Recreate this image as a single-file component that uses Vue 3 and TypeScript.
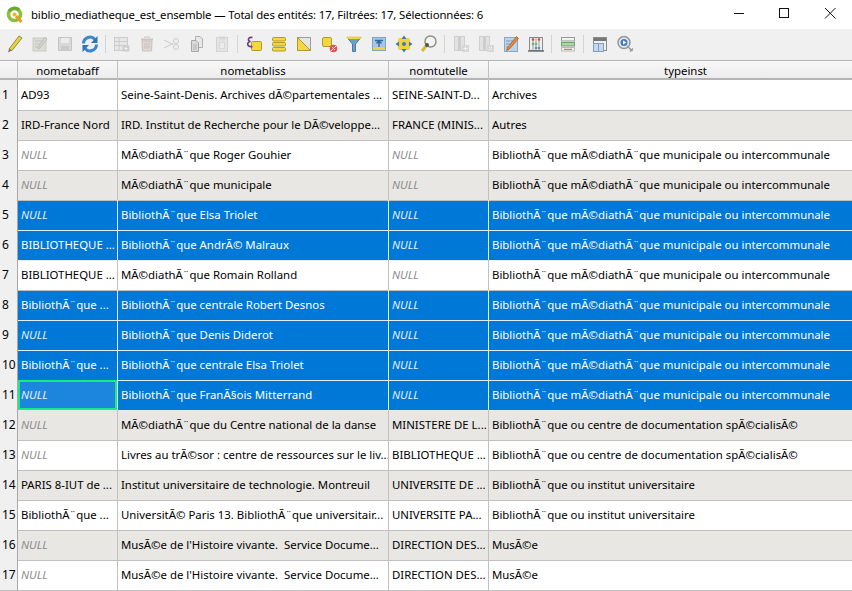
<script setup lang="ts">
interface Row {
  aff: string
  liss: string
  tut: string
  type: string
  sel?: boolean
}

const bib = 'BibliothÃ¨que mÃ©diathÃ¨que municipale ou intercommunale'
const doc = 'BibliothÃ¨que ou centre de documentation spÃ©cialisÃ©'
const univ = 'BibliothÃ¨que ou institut universitaire'

const rows: Row[] = [
  { aff: 'AD93', liss: 'Seine-Saint-Denis. Archives dÃ©partementales ...', tut: 'SEINE-SAINT-D...', type: 'Archives' },
  { aff: 'IRD-France Nord', liss: 'IRD. Institut de Recherche pour le DÃ©veloppe...', tut: 'FRANCE (MINIS...', type: 'Autres' },
  { aff: 'NULL', liss: 'MÃ©diathÃ¨que Roger Gouhier', tut: 'NULL', type: bib },
  { aff: 'NULL', liss: 'MÃ©diathÃ¨que municipale', tut: 'NULL', type: bib },
  { aff: 'NULL', liss: 'BibliothÃ¨que Elsa Triolet', tut: 'NULL', type: bib, sel: true },
  { aff: 'BIBLIOTHEQUE ...', liss: 'BibliothÃ¨que AndrÃ© Malraux', tut: 'NULL', type: bib, sel: true },
  { aff: 'BIBLIOTHEQUE ...', liss: 'MÃ©diathÃ¨que Romain Rolland', tut: 'NULL', type: bib },
  { aff: 'BibliothÃ¨que ...', liss: 'BibliothÃ¨que centrale Robert Desnos', tut: 'NULL', type: bib, sel: true },
  { aff: 'NULL', liss: 'BibliothÃ¨que Denis Diderot', tut: 'NULL', type: bib, sel: true },
  { aff: 'BibliothÃ¨que ...', liss: 'BibliothÃ¨que centrale Elsa Triolet', tut: 'NULL', type: bib, sel: true },
  { aff: 'NULL', liss: 'BibliothÃ¨que FranÃ§ois Mitterrand', tut: 'NULL', type: bib, sel: true },
  { aff: 'NULL', liss: 'MÃ©diathÃ¨que du Centre national de la danse', tut: 'MINISTERE DE L...', type: doc },
  { aff: 'NULL', liss: 'Livres au trÃ©sor : centre de ressources sur le liv...', tut: 'BIBLIOTHEQUE ...', type: doc },
  { aff: 'PARIS 8-IUT de ...', liss: 'Institut universitaire de technologie. Montreuil', tut: 'UNIVERSITE DE ...', type: univ },
  { aff: 'BibliothÃ¨que ...', liss: 'UniversitÃ© Paris 13. BibliothÃ¨que universitair...', tut: 'UNIVERSITE PA...', type: univ },
  { aff: 'NULL', liss: "MusÃ©e de l'Histoire vivante.  Service Docume...", tut: 'DIRECTION DES...', type: 'MusÃ©e' },
  { aff: 'NULL', liss: "MusÃ©e de l'Histoire vivante.  Service Docume...", tut: 'DIRECTION DES...', type: 'MusÃ©e' },
]

const headers = ['nometabaff', 'nometabliss', 'nomtutelle', 'typeinst']
</script>

<template>
  <div class="win">
    <div class="titlebar">
      <svg class="logo" width="18" height="18" viewBox="0 0 18 18">
        <circle cx="8.5" cy="8.5" r="6" fill="none" stroke="#8fbf3f" stroke-width="3.6" />
        <path d="M3 5.5 A6.5 6.5 0 0 1 13 4" fill="none" stroke="#6ea92f" stroke-width="3.4" />
        <circle cx="8.5" cy="8.5" r="2" fill="#f0b429" />
        <path d="M10 10 L15.5 16" stroke="#e8a01f" stroke-width="3" />
      </svg>
      <span class="title">biblio_mediatheque_est_ensemble — Total des entités: 17, Filtrées: 17, Sélectionnées: 6</span>
      <div class="winbtns">
        <svg width="46" height="29" viewBox="0 0 46 29"><path d="M20 13.5 H30" stroke="#111" /></svg>
        <svg width="46" height="29" viewBox="0 0 46 29"><rect x="19.5" y="8.5" width="9" height="9" fill="none" stroke="#111" /></svg>
        <svg width="46" height="29" viewBox="0 0 46 29"><path d="M19 8 L29.500 18.5 M29.500 8 L19 18.5" stroke="#111" /></svg>
      </div>
    </div>

    <div class="toolbar">
      <!-- toggle editing -->
      <div class="tb">
        <svg width="20" height="20" viewBox="0 0 20 20">
          <path d="M14 2 L17 4 L7 16.5 L4 15 Z" fill="#e8cf4a" stroke="#9b8d3a" />
          <path d="M4 15 L3 18.5 L7 16.5 Z" fill="#77756c" />
        </svg>
      </div>
      <!-- multi edit -->
      <div class="tb off">
        <svg width="20" height="20" viewBox="0 0 20 20">
          <rect x="3" y="4" width="13" height="13" fill="#d9d9d2" stroke="#c4c4bc" />
          <path d="M5 7 H12 M5 10 H10 M5 13 H9" stroke="#bdbdb5" />
          <path d="M15 3 L17 5 L10 14 L8 15 L8.500 12.500 Z" fill="#cfcfc6" stroke="#b8b8b0" />
        </svg>
      </div>
      <!-- save -->
      <div class="tb off">
        <svg width="20" height="20" viewBox="0 0 20 20">
          <path d="M3.500 3.500 H16.500 V16.500 H3.500 Z" fill="#d6d6d6" stroke="#bdbdbd" />
          <rect x="6" y="4" width="8" height="5" fill="#ececec" />
          <rect x="6" y="12" width="8" height="4.500" fill="#c4c4c4" />
        </svg>
      </div>
      <!-- reload -->
      <div class="tb">
        <svg width="20" height="20" viewBox="0 0 20 20" fill="none">
          <path d="M3.500 9.500 A6.500 6.500 0 0 1 15 5.500" stroke="#3c87c9" stroke-width="3" />
          <path d="M16.500 10.500 A6.500 6.500 0 0 1 5 14.500" stroke="#3c87c9" stroke-width="3" />
          <path d="M17.500 2 V9 H11 Z" fill="#2f75b5" />
          <path d="M2.500 18 V11 H9 Z" fill="#2f75b5" />
        </svg>
      </div>
      <div class="sep"></div>
      <!-- add feature -->
      <div class="tb off">
        <svg width="20" height="20" viewBox="0 0 20 20">
          <rect x="2.500" y="3.500" width="13" height="13" fill="#e6e6e6" stroke="#c6c6c6" />
          <path d="M2.500 7.500 H15.500 M2.500 11.500 H15.500 M7 3.500 V16.500" stroke="#c6c6c6" />
          <rect x="10.500" y="11.500" width="7" height="6" fill="#c9c9c9" />
          <path d="M12.500 14.500 H15.500 M14 13 V16" stroke="#f4f4f4" />
        </svg>
      </div>
      <!-- delete -->
      <div class="tb off">
        <svg width="20" height="20" viewBox="0 0 20 20">
          <path d="M4 5.500 H16" stroke="#c9bfbb" stroke-width="2" />
          <path d="M7.500 4 V3 H12.500 V4" fill="none" stroke="#c9bfbb" />
          <path d="M5 7 H15 L14.500 17 H5.500 Z" fill="#dcd5d2" stroke="#c4b9b5" />
          <path d="M8 9 V15 M10 9 V15 M12 9 V15" stroke="#c4b9b5" />
        </svg>
      </div>
      <!-- cut -->
      <div class="tb off">
        <svg width="20" height="20" viewBox="0 0 20 20" fill="none" stroke="#c6c6c6">
          <path d="M2 6 L11 10.500 M2 14 L11 9.500" />
          <circle cx="14" cy="7" r="2.500" />
          <circle cx="14" cy="13" r="2.500" />
        </svg>
      </div>
      <!-- copy -->
      <div class="tb off">
        <svg width="20" height="20" viewBox="0 0 20 20">
          <path d="M8.500 2.500 H13 L15.500 5 V13.500 H8.500 Z" fill="#e6e6e6" stroke="#a6a6a6" />
          <path d="M4.500 6.500 H9 L11.500 9 V17.500 H4.500 Z" fill="#d8d8d8" stroke="#9a9a9a" />
          <path d="M6 11 H10 M6 13 H10 M6 15 H10" stroke="#aaa" />
        </svg>
      </div>
      <!-- paste -->
      <div class="tb off">
        <svg width="20" height="20" viewBox="0 0 20 20">
          <rect x="4.500" y="3.500" width="11" height="14" fill="#e2e2e2" stroke="#cecece" />
          <rect x="7" y="2.500" width="6" height="3" fill="#d2d2d2" />
          <rect x="7.500" y="8.500" width="5" height="6" fill="#ececec" stroke="#d4d4d4" />
        </svg>
      </div>
      <div class="sep"></div>
      <!-- select by expression -->
      <div class="tb">
        <svg width="20" height="20" viewBox="0 0 20 20">
          <rect x="7.500" y="7.500" width="10" height="9" rx="1" fill="#f3d93f" stroke="#b09a2a" />
          <path d="M8.500 3.500 C4 2.500 3 7 6.500 7.500 C2 8 3 13.500 8.500 12.500" fill="none" stroke="#6a3d8a" stroke-width="1.600" />
        </svg>
      </div>
      <!-- select all -->
      <div class="tb">
        <svg width="20" height="20" viewBox="0 0 20 20" fill="#f3d93f" stroke="#b09a2a">
          <rect x="3.500" y="3.500" width="13" height="3.500" rx="1" />
          <rect x="3.500" y="8.500" width="13" height="3.500" rx="1" />
          <rect x="3.500" y="13.500" width="13" height="3.500" rx="1" />
        </svg>
      </div>
      <!-- invert selection -->
      <div class="tb">
        <svg width="20" height="20" viewBox="0 0 20 20">
          <rect x="3.500" y="3.500" width="13" height="13" fill="#e4e4e4" stroke="#9d9d9d" />
          <path d="M3.500 3.500 V16.500 H16.500 Z" fill="#f3d93f" stroke="#b09a2a" />
        </svg>
      </div>
      <!-- deselect -->
      <div class="tb">
        <svg width="20" height="20" viewBox="0 0 20 20">
          <rect x="3.500" y="3.500" width="9" height="9" rx="1.500" fill="#f3d93f" stroke="#b09a2a" />
          <circle cx="14.500" cy="14.500" r="3.800" fill="#e2504f" />
          <path d="M12 17 L17 12 M13 13 L16 16" stroke="#fff" />
        </svg>
      </div>
      <!-- filter -->
      <div class="tb">
        <svg width="20" height="20" viewBox="0 0 20 20">
          <path d="M3 3.500 H17 L11.500 10 V17.500 H8.500 V10 Z" fill="#6f9fc4" stroke="#4c7da3" />
          <rect x="3" y="2.500" width="14" height="2.500" fill="#f0d23c" />
        </svg>
      </div>
      <!-- move selection to top -->
      <div class="tb">
        <svg width="20" height="20" viewBox="0 0 20 20">
          <rect x="3.500" y="3.500" width="13" height="13" fill="#a9c6e0" stroke="#7ea3c4" />
          <rect x="4" y="13" width="12" height="3" fill="#f0d23c" />
          <path d="M6 6.500 H14 M10 6.500 V13 M7.500 9.500 L10 7 L12.500 9.500" fill="none" stroke="#2f6a9c" stroke-width="1.400" />
        </svg>
      </div>
      <!-- pan to selected -->
      <div class="tb">
        <svg width="20" height="20" viewBox="0 0 20 20">
          <rect x="4" y="4" width="12" height="12" rx="2" fill="#f0d23c" />
          <path d="M10 1.500 L12.500 5 H7.500 Z M10 18.500 L12.500 15 H7.500 Z M1.500 10 L5 7.500 V12.500 Z M18.500 10 L15 7.500 V12.500 Z" fill="#3f78ad" />
          <circle cx="10" cy="10" r="2" fill="#3f78ad" />
        </svg>
      </div>
      <!-- zoom to selected -->
      <div class="tb">
        <svg width="20" height="20" viewBox="0 0 20 20">
          <path d="M7.500 11.500 L3 17" stroke="#d6bc2f" stroke-width="3" />
          <circle cx="11.500" cy="7.500" r="5.500" fill="#f3f3ef" stroke="#8d8d85" stroke-width="1.400" />
          <circle cx="8" cy="11" r="2" fill="#555" />
        </svg>
      </div>
      <div class="sep"></div>
      <!-- new field -->
      <div class="tb off">
        <svg width="20" height="20" viewBox="0 0 20 20">
          <rect x="3.500" y="2.500" width="10" height="14" fill="#e0e0e0" stroke="#cacaca" />
          <rect x="7" y="3" width="3" height="13" fill="#c8c8c8" />
          <rect x="11" y="11" width="7" height="7" fill="#d2d2d2" />
          <path d="M12.500 14.500 H16.500 M14.500 12.500 V16.500" stroke="#f4f4f4" />
        </svg>
      </div>
      <!-- delete field -->
      <div class="tb off">
        <svg width="20" height="20" viewBox="0 0 20 20">
          <rect x="3.500" y="2.500" width="10" height="14" fill="#e0e0e0" stroke="#cacaca" />
          <rect x="7" y="3" width="3" height="13" fill="#c8c8c8" />
          <rect x="11" y="11" width="7" height="7" fill="#d2d2d2" />
          <path d="M13 13 L16 16 M16 13 L13 16" stroke="#f4f4f4" />
        </svg>
      </div>
      <!-- organize columns -->
      <div class="tb">
        <svg width="20" height="20" viewBox="0 0 20 20">
          <rect x="3.500" y="3.500" width="13" height="14" fill="#bcd4ea" stroke="#84a9cb" />
          <path d="M5 7 H12 M5 10 H10 M5 13 H9" stroke="#7b9cba" />
          <path d="M15.500 2.500 L17.500 4.500 L8.500 15 L5.500 16.500 L6.500 13.500 Z" fill="#e9843a" stroke="#9f5a25" stroke-width=".7" />
        </svg>
      </div>
      <!-- field calculator -->
      <div class="tb">
        <svg width="20" height="20" viewBox="0 0 20 20">
          <rect x="3.500" y="3.500" width="13" height="13" fill="#f0f0f0" stroke="#8a8a8a" />
          <path d="M2 17 H18" stroke="#6e6e6e" stroke-width="1.500" />
          <path d="M7 4 V16 M10 4 V16 M13 4 V16" stroke="#9a9a9a" />
          <circle cx="7" cy="5.500" r="1.300" fill="#d24c4c" />
          <circle cx="13" cy="5.500" r="1.300" fill="#d24c4c" />
          <circle cx="7" cy="10" r="1.300" fill="#6cb56c" />
          <circle cx="10" cy="10" r="1.300" fill="#6cb56c" />
          <circle cx="10" cy="14" r="1.300" fill="#5b92c4" />
          <circle cx="13" cy="14" r="1.300" fill="#5b92c4" />
        </svg>
      </div>
      <div class="sep"></div>
      <!-- conditional formatting -->
      <div class="tb">
        <svg width="20" height="20" viewBox="0 0 20 20">
          <rect x="3.500" y="3.500" width="13" height="3.500" fill="#f2f2f2" stroke="#9a9a9a" />
          <rect x="3.500" y="8.500" width="13" height="3.500" fill="#a9d8a4" stroke="#6eaa69" />
          <rect x="3.500" y="13.500" width="13" height="3.500" fill="#f2f2f2" stroke="#bbb" />
          <path d="M6 15.300 H14" stroke="#d95a5a" />
        </svg>
      </div>
      <div class="sep"></div>
      <!-- dock -->
      <div class="tb">
        <svg width="20" height="20" viewBox="0 0 20 20">
          <rect x="3.500" y="3.500" width="13" height="13" fill="#f0f0f0" stroke="#8a8a8a" />
          <rect x="4" y="4" width="12" height="3" fill="#777" />
          <rect x="3.500" y="9.500" width="10" height="8" fill="#c4d9ec" stroke="#7f9fbd" />
          <path d="M8.500 9.500 V17.500" stroke="#7f9fbd" />
        </svg>
      </div>
      <!-- actions -->
      <div class="tb">
        <svg width="20" height="20" viewBox="0 0 20 20">
          <circle cx="9" cy="8.500" r="6" fill="#e6e6e6" stroke="#8f979e" stroke-width="1.500" />
          <circle cx="9" cy="8.500" r="3.500" fill="#3f7fb8" />
          <path d="M8 6.500 L11.500 8.500 L8 10.500 Z" fill="#fff" />
          <path d="M12 12 L17.500 17 M15 17.500 L18 14.500" stroke="#9a9a9a" stroke-width="1.500" />
        </svg>
      </div>
    </div>

    <div class="grid">
      <div class="row head">
        <div class="corner"></div>
        <div v-for="h in headers" :key="h" class="hcell">{{ h }}</div>
      </div>
      <div v-for="(r, i) in rows" :key="i" class="row" :class="{ alt: i % 2 === 1, sel: r.sel }">
        <div class="num">{{ i + 1 }}</div>
        <div class="cell" :class="{ nul: r.aff === 'NULL', current: i === 10 }">{{ r.aff }}</div>
        <div class="cell">{{ r.liss }}</div>
        <div class="cell" :class="{ nul: r.tut === 'NULL' }">{{ r.tut }}</div>
        <div class="cell">{{ r.type }}</div>
      </div>
    </div>
  </div>
</template>

<style scoped>
.win {
  width: 852px;
  height: 591px;
  overflow: hidden;
  background: #fff;
  font-family: "Noto Sans", "Open Sans", sans-serif;
  font-size: 11.4px;
  color: #000;
}

.titlebar {
  height: 29px;
  display: flex;
  align-items: center;
  padding-left: 6px;
}

.logo {
  margin-right: 7px;
}

.title {
  flex: 1;
  white-space: nowrap;
  letter-spacing: -0.14px;
}

.winbtns {
  display: flex;
}

.toolbar {
  height: 32px;
  box-sizing: border-box;
  display: flex;
  align-items: center;
  padding: 0 0 1px 2px;
  background: #f0f0f0;
  border-bottom: 1px solid #b4b4b4;
}

.tb {
  width: 25px;
  height: 22px;
  display: flex;
  align-items: center;
  justify-content: center;
}

.tb.off {
  opacity: 0.85;
}

.sep {
  width: 1px;
  height: 18px;
  margin: 0 3px;
  background: #d4d4d4;
}

.row {
  display: grid;
  grid-template-columns: 18px 100px 271px 100px 1fr;
  height: 30px;
  background: #fff;
}

.row.alt {
  background: #e9e7e3;
}

.row.sel {
  background: #0078d7;
  color: #fff;
}

.row.head {
  height: 19px;
  background: linear-gradient(#f8f8f8, #ececec);
  border-bottom: 2px solid #b4b4b4;
  box-sizing: border-box;
}

.hcell {
  box-sizing: border-box;
  text-align: center;
  line-height: 19px;
  border-right: 1px solid #c0c0c0;
  white-space: nowrap;
}

.hcell:last-child {
  padding-left: 30px;
  border-right: none;
}

.corner {
  border-right: 1px solid #c0c0c0;
}

.num {
  box-sizing: border-box;
  padding-left: 2px;
  line-height: 30px;
  font-size: 12px;
  color: #000;
  background: #f0f0f0;
  border-right: 1px solid #a8a8a8;
  border-bottom: 1px solid #c0c0c0;
}

.cell {
  box-sizing: border-box;
  padding-left: 3px;
  line-height: 29px;
  white-space: pre;
  overflow: hidden;
  border-right: 1px solid #c0c0c0;
  border-bottom: 1px solid #c0c0c0;
}

.cell:last-child {
  border-right: none;
}

.row.sel .cell {
  border-color: #e4eef7;
}

.nul {
  font-style: italic;
  color: #8c8c8c;
}

.row.sel .nul {
  color: #e6f1fb;
}

.row.sel .current {
  background: #1c86de;
  box-shadow: inset 0 0 0 2px #14ec88;
}
</style>

<style>
html,
body {
  margin: 0;
  background: #fff;
}
</style>
